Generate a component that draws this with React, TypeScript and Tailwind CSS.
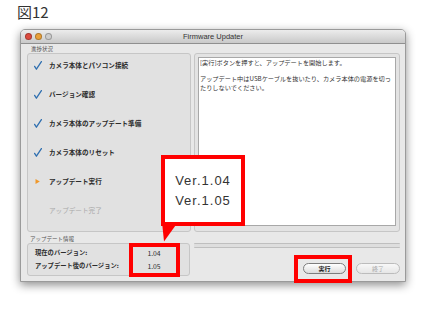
import * as React from 'react'

const jp = { fontFamily: '"Noto Sans CJK JP", "Noto Sans", sans-serif' }

const steps = [
  { label: 'カメラ本体とパソコン接続', state: 'done' },
  { label: 'バージョン確認', state: 'done' },
  { label: 'カメラ本体のアップデート準備', state: 'done' },
  { label: 'カメラ本体のリセット', state: 'done' },
  { label: 'アップデート実行', state: 'current' },
  { label: 'アップデート完了', state: 'todo' },
]

function Check() {
  return (
    <svg width="8" height="9" viewBox="0 0 8 9">
      <path d="M0.6 5.4 L2.4 8.2 L7.4 0.6" fill="none" stroke="#2f6fb0" strokeWidth="1.3" strokeLinecap="round" strokeLinejoin="round" />
    </svg>
  )
}

function Play() {
  return (
    <svg width="8" height="9" viewBox="0 0 8 9">
      <path d="M1.5 2 L5.8 4.5 L1.5 7 Z" fill="#f0982a" />
    </svg>
  )
}

function Light({ color }: { color: string }) {
  return <span className={`w-[7px] h-[7px] rounded-full border border-black/25 ${color}`} />
}

export default function App() {
  return (
    <div className="relative w-[430px] h-[310px] bg-white overflow-hidden" style={jp}>
      <div className="pt-[2px] pl-[17px] h-[22px] text-[15px] leading-[20px] font-normal text-[#333]">図12</div>

      <div className="mt-[7px] ml-[20px] w-[386px] h-[253px] bg-[#e8e8e8] border border-[#9a9a9a] rounded-t-[5px] shadow-[0_3px_10px_rgba(0,0,0,0.45)] flex flex-col">
        {/* title bar */}
        <div className="relative h-[14px] rounded-t-[4px] bg-gradient-to-b from-[#ececec] to-[#c9c9c9] border-b border-[#8f8f8f] flex items-center justify-center">
          <div className="absolute left-[4px] top-[2.5px] flex gap-[3px]">
            <Light color="bg-[#dc4a3e]" />
            <Light color="bg-[#eaa13a]" />
            <Light color="bg-[#cdcdcd]" />
          </div>
          <span className="text-[7.5px] text-[#333]" style={{ fontFamily: '"Liberation Sans", sans-serif' }}>
            Firmware Updater
          </span>
        </div>

        <div className="flex-1 pl-[6px] pr-[5px] flex flex-col">
          <div className="h-[9px] pl-[4px] pt-[1px] text-[5.5px] leading-[8px] text-[#555]">進捗状況</div>

          <div className="h-[179px] flex gap-[3px]">
            <div className="w-[164px] bg-[#e1e1e1] border border-[#c6c6c6] rounded-[3px] pt-[7px] pl-[6px] flex flex-col gap-[21px]">
              {steps.map((s) => (
                <div key={s.label} className="h-[8px] flex items-center gap-[7px]">
                  <span className="w-[8px] h-[9px] flex items-center">
                    {s.state === 'done' && <Check />}
                    {s.state === 'current' && <Play />}
                  </span>
                  <span
                    className={`text-[6.6px] leading-[8px] whitespace-nowrap ${
                      s.state === 'todo' ? 'text-[#a9a9a9]' : 'font-bold text-[#2c2c2c]'
                    }`}
                  >
                    {s.label}
                  </span>
                </div>
              ))}
            </div>

            <div className="flex-1 bg-[#e3e3e3] border border-[#c6c6c6] rounded-[3px] p-[3px] pb-[5px]">
              <div className="h-full bg-white border border-[#a8a8a8] pl-[1px] text-[6.2px] leading-[9px] text-[#333] whitespace-nowrap">
                <p className="mb-[7px]">[実行]ボタンを押すと、アップデートを開始します。</p>
                <p>アップデート中はUSBケーブルを抜いたり、カメラ本体の電源を切っ</p>
                <p>たりしないでください。</p>
              </div>
            </div>
          </div>

          <div className="flex gap-[3px]">
            <div className="w-[164px]">
              <div className="h-[11px] pt-[3px] pl-[3px] text-[5.5px] leading-[8px] text-[#555]">アップデート情報</div>
              <div className="w-[163px] h-[33px] bg-[#e1e1e1] border border-[#c6c6c6] rounded-[3px] pt-[5px] pl-[7px] flex flex-col gap-[5px] text-[6.3px] leading-[8px] text-[#2c2c2c]">
                <div className="flex">
                  <span className="flex-1 font-bold">現在のバージョン:</span>
                  <span className="w-[50px] mr-[10px] text-center text-[6.8px]">1.04</span>
                </div>
                <div className="flex">
                  <span className="flex-1 font-bold whitespace-nowrap">アップデート後のバージョン:</span>
                  <span className="w-[50px] mr-[10px] text-center text-[6.8px]">1.05</span>
                </div>
              </div>
            </div>

            <div className="flex-1 pt-[11px] flex flex-col">
              <div className="h-[5px] bg-[#dedede] border-y border-[#bfbfbf] rounded-[1px]" />
              <div className="mt-[15px] flex justify-end gap-[10px]">
                <button className="w-[43px] h-[11px] rounded-full border border-[#7d7d7d] bg-gradient-to-b from-white to-[#dcdcdc] text-[6px] leading-[9px] font-bold text-[#222]">
                  実行
                </button>
                <button className="w-[44px] h-[11px] rounded-full border border-[#bcbcbc] bg-gradient-to-b from-[#f8f8f8] to-[#e6e6e6] text-[6px] leading-[9px] text-[#a8a8a8]">
                  終了
                </button>
              </div>
            </div>
          </div>
        </div>
      </div>

      {/* red annotations */}
      <div className="absolute left-[129px] top-[243px] w-[51px] h-[34px] border-[4px] border-[#ff0000]" />
      <div className="absolute left-[294px] top-[255px] w-[58px] h-[28px] border-[4px] border-[#ff0000]" />
      <svg className="absolute left-[162px] top-[222px]" width="18" height="20" viewBox="0 0 18 20">
        <path d="M0 0 L16 0 L2 19.5 Z" fill="#ff0000" />
      </svg>
      <div
        className="absolute left-[161px] top-[155px] w-[84px] h-[71px] border-[4px] border-[#ff0000] bg-white flex flex-col items-center justify-center text-[13px] leading-[20px] tracking-[1px] text-[#333]"
        style={{ fontFamily: '"Liberation Sans", sans-serif' }}
      >
        <span>Ver.1.04</span>
        <span>Ver.1.05</span>
      </div>
    </div>
  )
}
